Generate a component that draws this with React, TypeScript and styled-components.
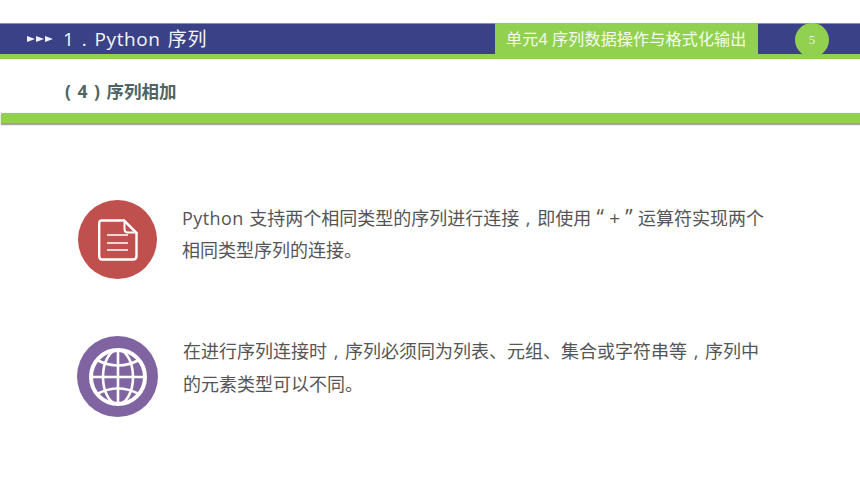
import styled, { createGlobalStyle } from "styled-components";

const GlobalStyle = createGlobalStyle`
  html, body {
    margin: 0;
    padding: 0;
    background: #ffffff;
    font-family: "Open Sans", "Noto Sans CJK SC", sans-serif;
  }
`;

const Slide = styled.div`
  width: 860px;
  height: 484px;
  padding-top: 23px;
  box-sizing: border-box;
  overflow: hidden;
`;

const NavBar = styled.div`
  height: 31px;
  display: flex;
  align-items: stretch;
  background: #3a4186;
  border-top: 1px solid #8a8fb5;
  box-sizing: border-box;
`;

const NavLeft = styled.div`
  width: 495px;
  display: flex;
  align-items: center;
  padding: 0 0 2px 27px;
  box-sizing: border-box;
  gap: 10px;
`;

const Arrows = styled.div`
  display: flex;
  gap: 1px;
  margin-top: 2px;
`;

const Arrow = styled.span`
  width: 0;
  height: 0;
  border-left: 8px solid #f2f2f8;
  border-top: 3.5px solid transparent;
  border-bottom: 3.5px solid transparent;
`;

const NavTitle = styled.div`
  color: #f4f5fa;
  font-size: 19px;
  letter-spacing: 0.6px;
  word-spacing: 1.7px;
  white-space: nowrap;
`;

const UnitTag = styled.div`
  width: 263px;
  background: #92d14f;
  color: #f7fcf0;
  font-size: 16px;
  letter-spacing: 0.2px;
  line-height: 33px;
  padding-left: 11px;
  box-sizing: border-box;
  white-space: nowrap;
  margin-top: -1px;
  height: 31px;
`;

const PageSlot = styled.div`
  flex: 1;
  position: relative;
`;

const PageBadge = styled.div`
  position: absolute;
  left: 37px;
  top: -1px;
  width: 34px;
  height: 34px;
  border-radius: 50%;
  background: #92d14f;
  color: #e6f3d6;
  font-family: "Liberation Serif", serif;
  font-size: 13px;
  display: flex;
  align-items: center;
  justify-content: center;
`;

const GreenStrip = styled.div`
  height: 5px;
  background: #92d14f;
`;

const SubHeader = styled.div`
  height: 54px;
  display: flex;
  align-items: center;
  padding: 8px 0 0 65px;
  box-sizing: border-box;
  color: #4f6464;
  font-size: 17.5px;
  font-weight: 700;
  word-spacing: 2px;
`;

const GreenBar = styled.div`
  height: 10px;
  margin-left: 1px;
  background: #92d14f;
  box-shadow: 0 2px 1px rgba(90, 90, 90, 0.55), 0 0 1px rgba(120, 120, 120, 0.25);
`;

const Content = styled.div`
  display: flex;
  flex-direction: column;
  padding: 77px 0 0 77px;
  gap: 57px;
`;

const Row = styled.div`
  display: flex;
  align-items: flex-start;
  gap: 25px;
`;

const IconCircle = styled.div<{ $color: string; $size: number; $shift: number }>`
  width: ${({ $size }) => $size}px;
  height: ${({ $size }) => $size}px;
  flex: none;
  border-radius: 50%;
  background: ${({ $color }) => $color};
  margin-left: ${({ $shift }) => $shift}px;
  display: flex;
  align-items: center;
  justify-content: center;
`;

const RowText = styled.p<{ $top: number; $leading: number }>`
  margin: ${({ $top }) => $top}px 0 0;
  width: 600px;
  color: #555555;
  font-size: 18px;
  line-height: ${({ $leading }) => $leading}px;
  white-space: nowrap;
`;

const Latin = styled.span`
  letter-spacing: 0.4px;
  word-spacing: 0.5px;
`;

// full-width punctuation sits centred in its cell in the original font
const Punct = styled.span`
  display: inline-block;
  width: 18px;
  text-align: center;
`;

const Quote = styled(Punct)`
  font-size: 21px;
  line-height: 1;
`;

const Plus = styled.span`
  font-size: 19px;
  line-height: 1;
`;

const DocIcon = () => (
  <svg width="40" height="42" viewBox="0 0 40 42" fill="none" stroke="#ffffff">
    <path
      d="M4 1.500 H26 L38.500 14 V37 Q38.500 40.500 35 40.500 H4 Q1.200 40.500 1.200 37 V4.500 Q1.200 1.500 4 1.500 Z"
      strokeWidth="2.400"
    />
    <path d="M26.500 2 V10 Q26.500 13.500 30 13.500 H38 Z" strokeWidth="2" />
    <path d="M9 16 H30 M9 24 H30 M9 31 H30" strokeWidth="1.600" />
  </svg>
);

const GlobeIcon = () => (
  <svg width="60" height="60" viewBox="0 0 60 60" fill="none" stroke="#ffffff">
    <circle cx="30" cy="30" r="27" strokeWidth="4" />
    <ellipse cx="30" cy="30" rx="15" ry="27" strokeWidth="2.600" />
    <path d="M30 3 V57 M3 30 H57" strokeWidth="2.600" />
    <path d="M9 13 Q30 24 51 13 M9 47 Q30 36 51 47" strokeWidth="2.600" />
  </svg>
);

export default function App() {
  return (
    <Slide>
      <GlobalStyle />
      <NavBar>
        <NavLeft>
          <Arrows>
            <Arrow />
            <Arrow />
            <Arrow />
          </Arrows>
          <NavTitle>1 . Python 序列</NavTitle>
        </NavLeft>
        <UnitTag>单元4 序列数据操作与格式化输出</UnitTag>
        <PageSlot>
          <PageBadge>5</PageBadge>
        </PageSlot>
      </NavBar>
      <GreenStrip />
      <SubHeader>( 4 ) 序列相加</SubHeader>
      <GreenBar />
      <Content>
        <Row>
          <IconCircle $color="#c0504d" $size={79} $shift={1}>
            <DocIcon />
          </IconCircle>
          <RowText $top={2} $leading={32}>
            <Latin>Python </Latin>支持两个相同类型的序列进行连接<Punct>,</Punct>即使用
            <Quote>“</Quote><Plus>+</Plus><Quote>”</Quote>运算符实现两个
            <br />
            相同类型序列的连接。
          </RowText>
        </Row>
        <Row>
          <IconCircle $color="#8064a2" $size={81} $shift={0}>
            <GlobeIcon />
          </IconCircle>
          <RowText $top={-1} $leading={33}>
            在进行序列连接时<Punct>,</Punct>序列必须同为列表、元组、集合或字符串等<Punct>,</Punct>序列中
            <br />
            的元素类型可以不同。
          </RowText>
        </Row>
      </Content>
    </Slide>
  );
}
